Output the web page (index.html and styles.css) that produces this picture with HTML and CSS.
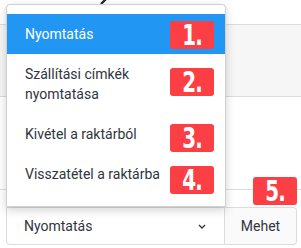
FILE: index.html
```html
<!DOCTYPE html>
<html>
<head>
<meta charset="utf-8">
<link rel="stylesheet" href="styles.css">
</head>
<body>
<div class="page">
  <svg class="frag" width="10" height="6" viewBox="0 0 10 6"><path d="M2 5 L7 0" stroke="#222" stroke-width="2.2" fill="none"/></svg>
  <div class="band"></div>
  <div class="spacer"></div>
  <div class="controls">
    <div class="select">
      <span>Nyomtatás</span>
      <svg class="chev" width="8" height="5" viewBox="0 0 8 5"><path d="M1 1 L4 4 L7 1" stroke="#333" stroke-width="1.3" fill="none"/></svg>
    </div>
    <div class="btn">Mehet</div>
  </div>

  <div class="menu">
    <div class="item active">Nyomtatás</div>
    <div class="item">Szállítási címkék<br>nyomtatása</div>
    <div class="item">Kivétel a raktárból</div>
    <div class="item">Visszatétel a raktárba</div>
  </div>

  <div class="badge b1"><span>1.</span></div>
  <div class="badge b2"><span>2.</span></div>
  <div class="badge b3"><span>3.</span></div>
  <div class="badge b4"><span>4.</span></div>
  <div class="badge b5"><span>5.</span></div>
</div>
</body>
</html>
```
FILE: styles.css
```css
html, body {
  margin: 0;
  padding: 0;
  background: #fff;
}
.page {
  position: relative;
  width: 301px;
  height: 248px;
  overflow: hidden;
  padding-top: 24px;
  box-sizing: border-box;
  font-family: Roboto, "Liberation Sans", sans-serif;
  font-size: 14px;
  color: #2f3540;
}
.frag {
  position: absolute;
  left: 99px;
  top: -1px;
}
.band {
  height: 71px;
  background: #f6f6f6;
  border-top: 1px solid #dcdcdc;
  border-bottom: 1px solid #dcdcdc;
}
.spacer {
  height: 92px;
  border-bottom: 1px solid #dcdcdc;
}
.controls {
  display: flex;
  margin: 17px 0 0 6px;
  height: 38px;
}
.select {
  width: 219px;
  box-sizing: border-box;
  border: 1px solid #dcdcdc;
  border-radius: 0 0 0 4px;
  display: flex;
  align-items: center;
  justify-content: space-between;
  padding: 0 18px 0 17px;
}
.chev {
  display: block;
}
.btn {
  width: 72px;
  box-sizing: border-box;
  border: 1px solid #dcdcdc;
  border-left: none;
  border-radius: 0 4px 4px 0;
  display: flex;
  align-items: center;
  justify-content: center;
  background: #fafafa;
}
.menu {
  position: absolute;
  left: 6px;
  top: 4px;
  width: 220px;
  height: 203px;
  box-sizing: border-box;
  background: #fff;
  border: 1px solid #d0d0d0;
  border-radius: 4px 4px 0 0;
  box-shadow: 0 3px 10px rgba(0,0,0,0.18);
  padding-top: 9px;
}
.item {
  padding: 10px 18px;
  line-height: 20px;
}
.item.active {
  background: #2196f3;
  color: #fff;
}
.badge {
  position: absolute;
  width: 44px;
  height: 28px;
  background: #fc3f44;
  border-radius: 3px;
  color: #fff;
  font-family: "DejaVu Sans Condensed", "Liberation Sans", sans-serif;
  font-weight: bold;
  font-size: 27px;
  line-height: 28px;
  text-align: center;
}
.badge span {
  display: inline-block;
  transform: scale(0.82, 1.08);
  letter-spacing: -1px;
}
.b1 { left: 170px; top: 21px; }
.b2 { left: 170px; top: 68px; }
.b3 { left: 170px; top: 124px; }
.b4 { left: 170px; top: 166px; }
.b5 { left: 253px; top: 177px; }
```
